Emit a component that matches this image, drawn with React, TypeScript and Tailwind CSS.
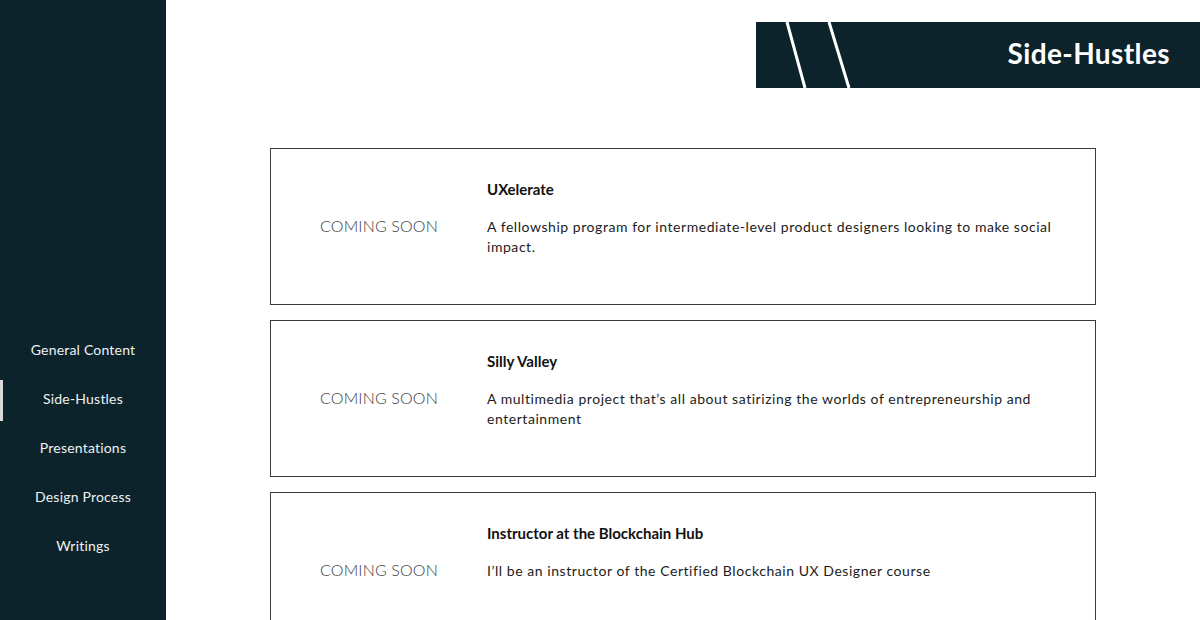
import React from "react";

const navItems = [
  "General Content",
  "Side-Hustles",
  "Presentations",
  "Design Process",
  "Writings",
];

const projects = [
  {
    title: "UXelerate",
    description:
      "A fellowship program for intermediate-level product designers looking to make social impact.",
  },
  {
    title: "Silly Valley",
    description:
      "A multimedia project that’s all about satirizing the worlds of entrepreneurship and entertainment",
  },
  {
    title: "Instructor at the Blockchain Hub",
    description: "I’ll be an instructor of the Certified Blockchain UX Designer course",
  },
];

function Sidebar() {
  return (
    <aside className="w-[166px] shrink-0 bg-[#0c232b] pt-[325px]">
      <nav className="flex flex-col">
        {navItems.map((item) => (
          <a
            key={item}
            href="#"
            className="relative flex h-[49px] items-center justify-center text-[14px] tracking-[0.2px] text-[#eef2f2]"
          >
            {item === "Side-Hustles" && (
              <span className="absolute left-0 top-[6px] h-[41px] w-[3px] bg-[#d9d9d9]" />
            )}
            {item}
          </a>
        ))}
      </nav>
    </aside>
  );
}

function Banner() {
  return (
    <div className="flex justify-end pt-[22px]">
      <div className="relative flex h-[66px] w-[444px] items-center justify-end overflow-hidden bg-[#0c232b] pb-[4px] pr-[30px]">
        <svg
          className="absolute left-0 top-0"
          width="120"
          height="66"
          viewBox="0 0 120 66"
        >
          <line x1="31" y1="0" x2="49" y2="66" stroke="#ffffff" strokeWidth="3" />
          <line x1="73" y1="0" x2="93" y2="66" stroke="#ffffff" strokeWidth="3" />
        </svg>
        <h1 className="text-[28px] font-bold leading-none tracking-[0.4px] text-white">
          Side-Hustles
        </h1>
      </div>
    </div>
  );
}

function ProjectCard({ title, description }: { title: string; description: string }) {
  return (
    <div className="flex h-[157px] border border-[#3a3a3a] bg-white">
      <div className="flex w-[216px] shrink-0 items-center justify-center pb-[2px]">
        <span className="text-[16px] font-light tracking-[0.15px] text-[#3d3d3d]">COMING SOON</span>
      </div>
      <div className="flex-1 pr-[40px] pt-[28px]">
        <h2 className="text-[15px] font-bold leading-[24px] text-[#111]">{title}</h2>
        <p className="mt-[16px] text-[14px] leading-[20px] tracking-[0.55px] text-[#1c1c1c]">
          {description}
        </p>
      </div>
    </div>
  );
}

export default function App() {
  return (
    <div
      className="flex min-h-screen bg-white"
      style={{ fontFamily: "Lato, 'Noto Sans', sans-serif" }}
    >
      <Sidebar />
      <main className="flex-1">
        <Banner />
        <section className="mx-auto mt-[60px] flex w-[826px] flex-col gap-[15px] pb-10">
          {projects.map((p) => (
            <ProjectCard key={p.title} {...p} />
          ))}
        </section>
      </main>
    </div>
  );
}
